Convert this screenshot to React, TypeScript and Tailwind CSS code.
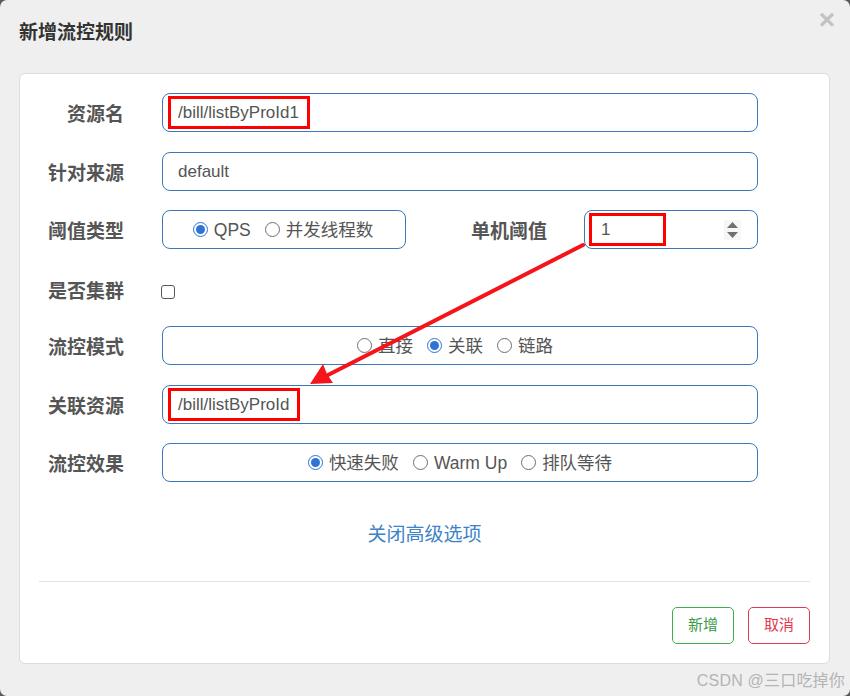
import clsx from "clsx";

const font = { fontFamily: '"Liberation Sans", "Noto Sans CJK SC", sans-serif' };

const Radio = ({ checked, label }: { checked?: boolean; label: string }) => (
  <span className="flex items-center gap-[6px]">
    <span
      className={clsx(
        "w-[15px] h-[15px] rounded-full flex items-center justify-center bg-white",
        checked ? "border-[1.5px] border-[#2f73d4]" : "border border-[#6f6f6f]"
      )}
    >
      {checked && <span className="w-[9px] h-[9px] rounded-full bg-[#2f73d4]" />}
    </span>
    <span className="pt-[2px]">{label}</span>
  </span>
);

const Label = ({ children }: { children: string }) => (
  <div className="w-[104px] shrink-0 pt-[5px] text-right text-[19px] font-bold text-[#555]">{children}</div>
);

const boxCls = "h-[39px] rounded-[8px] border border-[#3a78b9] bg-white flex items-center";

const RedMark = ({ children }: { children: string }) => (
  <span className="inline-flex items-center h-[33px] border-[3px] border-[#f00] pl-[7px] pr-[8px]">{children}</span>
);

export default function App() {
  return (
    <div className="w-[850px] h-[696px] bg-[#5a5a5a]" style={font}>
      <div className="relative w-[850px] h-[696px] rounded-[7px] bg-[#efefef] px-[19px] overflow-hidden">
        <div className="flex items-center justify-between h-[64px] pt-[2px]">
          <h2 className="text-[19px] font-bold text-[#333]">新增流控规则</h2>
          <span className="text-[28px] font-bold text-[#c2c2c2] leading-none -mt-[26px] -mr-[4px]">×</span>
        </div>

        <div className="mt-[9px] w-[811px] rounded-[6px] border border-[#dcdcdc] bg-white pt-[19px] pb-[19px]">
          <div className="pr-[71px] text-[17.5px] text-[#555]">
            <div className="flex items-center gap-[38px]">
              <Label>资源名</Label>
              <div className={clsx(boxCls, "flex-1 pl-[5px] text-[17px]")}>
                <RedMark>/bill/listByProId1</RedMark>
              </div>
            </div>

            <div className="flex items-center gap-[38px] mt-[20px]">
              <Label>针对来源</Label>
              <div className={clsx(boxCls, "flex-1 pl-[15px] text-[17px]")}>default</div>
            </div>

            <div className="flex items-center mt-[19px]">
              <Label>阈值类型</Label>
              <div className={clsx(boxCls, "ml-[38px] w-[244px] justify-center gap-[14px] pr-[2px]")}>
                <Radio checked label="QPS" />
                <Radio label="并发线程数" />
              </div>
              <div className="flex-1 pt-[5px] text-right text-[19px] font-bold text-[#555] pr-[37px]">单机阈值</div>
              <div className={clsx(boxCls, "w-[174px] pl-[4px] pr-[16px] justify-between text-[17px]")}>
                <span className="inline-flex items-center h-[33px] w-[77px] border-[3px] border-[#f00] pl-[9px]">1</span>
                <span className="flex flex-col items-center justify-center gap-[4px] w-[17px] h-[20px] bg-[#f6f6f6]">
                  <svg width="11" height="6" viewBox="0 0 11 6"><path d="M0 6 L5.5 0 L11 6 Z" fill="#707070" /></svg>
                  <svg width="11" height="6" viewBox="0 0 11 6"><path d="M0 0 L5.5 6 L11 0 Z" fill="#707070" /></svg>
                </span>
              </div>
            </div>

            <div className="flex items-center gap-[38px] mt-[22px] h-[38px]">
              <Label>是否集群</Label>
              <span className="w-[14px] h-[14px] -ml-[1px] mt-[4px] rounded-[3px] border border-[#555] bg-white" />
            </div>

            <div className="flex items-center gap-[38px] mt-[17px]">
              <Label>流控模式</Label>
              <div className={clsx(boxCls, "flex-1 justify-center gap-[14px] pr-[10px]")}>
                <Radio label="直接" />
                <Radio checked label="关联" />
                <Radio label="链路" />
              </div>
            </div>

            <div className="flex items-center gap-[38px] mt-[20px]">
              <Label>关联资源</Label>
              <div className={clsx(boxCls, "flex-1 pl-[5px] text-[17px]")}>
                <RedMark>/bill/listByProId</RedMark>
              </div>
            </div>

            <div className="flex items-center gap-[38px] mt-[19px]">
              <Label>流控效果</Label>
              <div className={clsx(boxCls, "flex-1 justify-center gap-[14px]")}>
                <Radio checked label="快速失败" />
                <Radio label="Warm Up" />
                <Radio label="排队等待" />
              </div>
            </div>
          </div>

          <div className="mt-[39px] text-center text-[19px] text-[#3d83c6]">关闭高级选项</div>

          <div className="mx-[19px] mt-[31px] border-t border-[#e3e3e3]" />

          <div className="flex justify-end gap-[14px] mr-[19px] mt-[25px]">
            <button className="w-[62px] h-[37px] rounded-[5px] border border-[#3fae4f] bg-white text-[15px] text-[#3a9a48]">新增</button>
            <button className="w-[62px] h-[37px] rounded-[5px] border border-[#dc3c50] bg-white text-[15px] text-[#e0384f]">取消</button>
          </div>
        </div>

        <div className="absolute right-[5px] bottom-[3px] text-[16px] text-[#b4b4b4] tracking-[0.2px]">CSDN @三口吃掉你</div>

        <svg className="absolute inset-0 pointer-events-none" width="850" height="696" viewBox="0 0 850 696">
          <line x1="583" y1="245" x2="328" y2="375" stroke="#f5141a" strokeWidth="4" strokeLinecap="round" />
          <path d="M310 384 L333 383 L327 374 L323 364 Z" fill="#f5141a" />
        </svg>
      </div>
    </div>
  );
}
